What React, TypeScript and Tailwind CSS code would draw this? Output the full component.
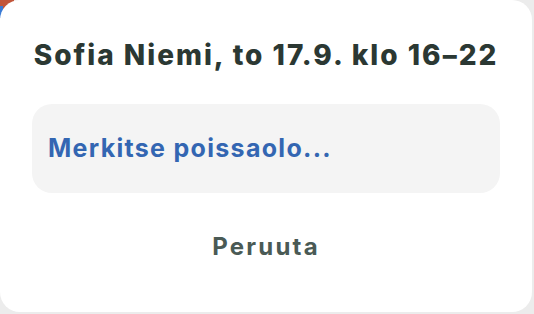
export default function App() {
  return (
    <div className="relative w-[534px] h-[314px] bg-[#ececec] overflow-hidden" style={{ fontFamily: "Inter, 'Liberation Sans', sans-serif" }}>
      {/* content behind the dialog */}
      <div className="absolute left-0 top-0 w-[14px] h-[10px] bg-[#c2553a]" />
      <div className="absolute left-0 top-[6px] w-[3px] h-[12px] bg-[#3a7bd5]" />

      <div className="relative flex flex-col w-[532px] h-[312px] rounded-[20px] bg-white px-8 pt-[39px]">
        <h1 className="text-center text-[28px] leading-8 font-extrabold text-[#2b3833] tracking-[2px] whitespace-nowrap">
          Sofia Niemi, to 17.9. klo 16–22
        </h1>
        <button className="mt-[33px] h-[89px] rounded-[20px] bg-[#f4f4f4] px-4 text-left text-[25px] font-bold text-[#3366b2] tracking-[1.3px]">
          Merkitse poissaolo...
        </button>
        <button className="mt-[39px] leading-[30px] text-center text-[24px] font-bold text-[#4a5a55] tracking-[2.2px]">
          Peruuta
        </button>
      </div>
    </div>
  )
}
